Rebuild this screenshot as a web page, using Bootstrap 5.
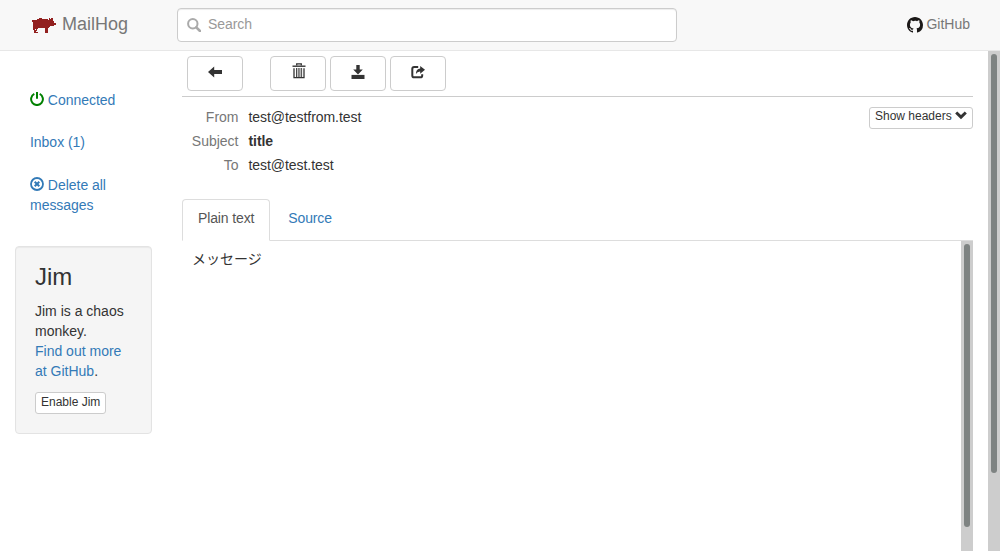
<!DOCTYPE html>
<html lang="en">
<head>
<meta charset="utf-8">
<title>MailHog</title>
<link href="https://cdn.jsdelivr.net/npm/bootstrap@5.3.0/dist/css/bootstrap.min.css" rel="stylesheet">
<style>
body{font-family:"Liberation Sans","Noto Sans CJK JP",sans-serif;font-size:14px;line-height:20px;color:#333;height:100vh;overflow:hidden}
a{color:#337ab7;text-decoration:none}
svg{display:block;flex:none}
.topbar{height:51px;background:#f8f8f8;border-bottom:1px solid #e7e7e7;padding:0 30px 0 32px;color:#777}
.brand{width:145px;font-size:18px;color:#777;gap:6px;padding-bottom:2px}
.search{width:500px;height:34px;border:1px solid #ccc;border-radius:4px;background:#fff;box-shadow:inset 0 1px 1px rgba(0,0,0,.075);padding:0 9px;gap:7px}
.search input{font-size:14px;line-height:20px;outline:0;padding:0 0 2px;letter-spacing:-.05px}
.search input::placeholder{color:#999;opacity:1}
.side{width:167px;padding:39px 15px 0}
.side .nav-link{padding:0 15px;color:#337ab7;margin-bottom:22px;letter-spacing:-.03px}
.side .nav-link:nth-child(2){margin-bottom:23px}
.side .nav-link svg{display:inline-block;vertical-align:-1px}
.well{background:#f5f5f5;border:1px solid #e3e3e3;border-radius:4px;padding:19px;height:188px;margin-top:9px;box-shadow:inset 0 1px 1px rgba(0,0,0,.05)}
.well h3{font-size:24px;line-height:26px;margin:-2px 0 11px;font-weight:400}
.well .btn{margin-top:11px;line-height:18px;padding-bottom:2px}
.btn-plain{border:1px solid #ccc;border-radius:4px;background:#fff;color:#333;padding:0}
.btn-mini{font-size:12px;line-height:16px;height:22px;padding:0 5px 4px;border-radius:3px}
.tool{width:56px;height:35px;display:flex;justify-content:center;padding-top:8px}
.pane{margin-left:15px;margin-right:15px;min-width:0}
.toolbar{height:46px;padding:5px 5px 0;border-bottom:1px solid #ccc;gap:4px}
.meta{padding-top:8px;height:102px}
.meta dt{width:56.5px;text-align:right;font-weight:400;color:#777;line-height:24px}
.meta dd{margin:0 0 0 10px;line-height:24px;letter-spacing:-.06px}
.nav-tabs{--bs-nav-tabs-border-color:#ddd}
.nav-tabs .nav-link{padding:8px 15px 12px;height:42px;border-radius:4px 4px 0 0;color:#337ab7;margin-right:2px;letter-spacing:-.13px}
.nav-tabs .nav-link.active{color:#555;border-color:#ddd #ddd #fff}
.track{width:12px;background:#cdcdcd;padding:3px}
.thumb{width:6px;border-radius:3px;background:#7e8382}
</style>
<script src="https://cdn.jsdelivr.net/npm/bootstrap@5.3.0/dist/js/bootstrap.bundle.min.js"></script>
</head>
<body class="d-flex flex-column bg-white">
<header class="topbar d-flex align-items-center flex-shrink-0">
  <a class="brand d-flex align-items-center" href="#">
    <svg style="margin-top:3px" width="24" height="16" viewBox="0 0 24 16" fill="#92201f" shape-rendering="crispEdges"><path d="M0 2H5V1H7V0H10V1H16V2H17V0H18V1H19V0H21V3H22V5H24V7H22V8H18V9H17V10H16V15H13V10H6V11H5V13H4V14H6V15H3V12H4V11H3V15H2V12H1V4H0Z"/></svg>
    <span>MailHog</span>
  </a>
  <div class="search d-flex align-items-center">
    <svg width="14" height="14" viewBox="0 0 14 14" fill="none" stroke="#aaa"><circle cx="5.8" cy="5.8" r="4.7" stroke-width="2"/><path d="M9.3 9.3L13 13" stroke-width="2.6" stroke-linecap="round"/></svg>
    <input class="border-0 bg-transparent flex-grow-1" type="text" placeholder="Search">
  </div>
  <a class="ms-auto d-flex align-items-center text-reset" style="gap:3px" href="#">
    <svg width="16" height="16" viewBox="0 0 16 16" fill="#1b1817"><path d="M8 0C3.58 0 0 3.58 0 8c0 3.54 2.29 6.53 5.47 7.59.4.07.55-.17.55-.38 0-.19-.01-.82-.01-1.49-2.01.37-2.53-.49-2.69-.94-.09-.23-.48-.94-.82-1.13-.28-.15-.68-.52-.01-.53.63-.01 1.08.58 1.23.82.72 1.21 1.87.87 2.33.66.07-.52.28-.87.51-1.07-1.78-.2-3.64-.89-3.64-3.95 0-.87.31-1.59.82-2.15-.08-.2-.36-1.02.08-2.12 0 0 .67-.21 2.2.82A7.4 7.4 0 0 1 8 3.86c.68 0 1.36.09 2 .27 1.53-1.04 2.2-.82 2.2-.82.44 1.1.16 1.92.08 2.12.51.56.82 1.27.82 2.15 0 3.07-1.87 3.75-3.65 3.95.29.25.54.73.54 1.48 0 1.07-.01 1.93-.01 2.2 0 .21.15.46.55.38A8 8 0 0 0 16 8c0-4.42-3.58-8-8-8z"/></svg>
    <span class="pb-1" style="margin-top:1px">GitHub</span>
  </a>
</header>
<div class="d-flex flex-grow-1 overflow-hidden">
  <aside class="side flex-shrink-0">
    <nav class="nav flex-column">
      <a class="nav-link" href="#"><svg width="14" height="14" viewBox="0 0 14 14" fill="none" stroke="#008000" stroke-width="2"><path d="M4.3 1.9A5.9 5.9 0 1 0 9.7 1.9M7 0V6.8"/></svg> Connected</a>
      <a class="nav-link" href="#">Inbox (1)</a>
      <a class="nav-link" href="#"><svg width="14" height="14" viewBox="0 0 14 14" fill="none" stroke="#337ab7" stroke-width="1.8"><circle cx="7" cy="7" r="6"/><path d="M4.7 4.7L9.3 9.3M9.3 4.7L4.7 9.3" stroke-width="2"/></svg> Delete all messages</a>
    </nav>
    <div class="well">
      <h3>Jim</h3>
      <p class="mb-0">Jim is a chaos monkey.<br><a href="#">Find out more at GitHub</a>.</p>
      <button class="btn btn-plain btn-mini align-top" type="button">Enable Jim</button>
    </div>
  </aside>
  <main class="pane d-flex flex-column flex-grow-1">
    <div class="toolbar d-flex flex-shrink-0">
      <button class="btn btn-plain tool me-4" type="button" aria-label="Back"><svg width="14" height="14" viewBox="0 0 14 14" fill="#333"><path d="M0 7L6.2 1.6V5H14V9H6.2V12.4Z"/></svg></button>
      <button class="btn btn-plain tool" type="button" aria-label="Delete" style="margin-left:-1px;padding:6px 0 0 2px"><svg width="14" height="16" viewBox="0 0 14 16" fill="none" stroke="#333"><path d="M.5 3.2H13.5" stroke-width="1.4"/><path d="M4.7 2.5V.9H9.3V2.5M2 5.2V14.6H12V5.2" stroke-width="1.3"/><path d="M4.5 5V14.5M6.2 5V14.5M7.9 5V14.5M9.6 5V14.5" stroke-width=".9"/></svg></button>
      <button class="btn btn-plain tool" type="button" aria-label="Download"><svg width="14" height="14" viewBox="0 0 14 14" fill="#333"><path d="M5.3 0H8.7V4.4H11.8L7 9.4L2.2 4.4H5.3Z"/><path d="M.5 9.9H13.5V14H.5Z"/></svg></button>
      <button class="btn btn-plain tool" type="button" aria-label="Release"><svg width="14" height="14" viewBox="0 0 14 14"><path d="M7.2 1.9H3.2Q1.3 1.9 1.3 3.8V10.4Q1.3 12.3 3.2 12.3H9.3Q11.2 12.3 11.2 10.4V9.2" fill="none" stroke="#333" stroke-width="2"/><path d="M9.2 1L14 4.8L9.2 8.7V6.4Q6.3 6.3 4.9 9Q5 3.7 9.2 3.4Z" fill="#333"/></svg></button>
    </div>
    <div class="meta d-flex justify-content-between flex-shrink-0">
      <dl class="mb-0">
        <div class="d-flex"><dt>From</dt><dd>test@testfrom.test</dd></div>
        <div class="d-flex"><dt>Subject</dt><dd class="fw-bold">title</dd></div>
        <div class="d-flex"><dt>To</dt><dd>test@test.test</dd></div>
      </dl>
      <button class="btn btn-plain btn-mini d-flex" type="button" style="margin-top:2px;width:104px;gap:3px">Show headers <svg style="margin-top:3px" width="12" height="9" viewBox="0 0 12 9"><path d="M1.2 1.5L6 6.1L10.8 1.5" fill="none" stroke="#333" stroke-width="3"/></svg></button>
    </div>
    <ul class="nav nav-tabs flex-shrink-0">
      <li class="nav-item"><a class="nav-link active" href="#">Plain text</a></li>
      <li class="nav-item"><a class="nav-link" href="#">Source</a></li>
    </ul>
    <div class="d-flex flex-grow-1 justify-content-between">
      <div style="padding:8px 10px">メッセージ</div>
      <div class="track"><div class="thumb" style="height:283px"></div></div>
    </div>
  </main>
  <div class="track flex-shrink-0"><div class="thumb" style="height:419px"></div></div>
</div>
</body>
</html>
